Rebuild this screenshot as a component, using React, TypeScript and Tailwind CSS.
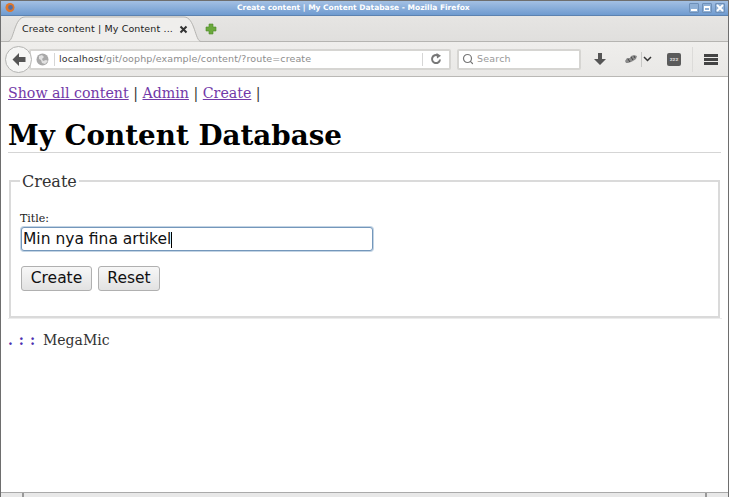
import { Search } from "lucide-react";

const serif = "font-['DejaVu_Serif',serif]";
const sans = "font-['DejaVu_Sans',sans-serif]";

function WinButton({ kind }: { kind: "min" | "max" | "close" }) {
  return (
    <div className="w-[10px] h-[10px] bg-[#8fb0d6] border border-[#6d8fb8] rounded-[1px] flex items-center justify-center">
      {kind === "min" && <div className="w-[6px] h-[2px] bg-white mt-[4px]" />}
      {kind === "max" && <div className="w-[6px] h-[5px] border border-t-2 border-white" />}
      {kind === "close" && (
        <svg width="8" height="8" viewBox="0 0 8 8">
          <path d="M1 1l6 6M7 1L1 7" stroke="#fff" strokeWidth="1.8" />
        </svg>
      )}
    </div>
  );
}

function TitleBar() {
  return (
    <div className="relative h-[16px] shrink-0 bg-gradient-to-b from-[#a3c0e3] to-[#6f9bd0] border-t border-t-[#6e6e6e] border-b border-b-[#5c82b0] flex items-center">
      <svg className="absolute left-[4px] top-[1px]" width="10" height="11" viewBox="0 0 10 11">
        <circle cx="5" cy="5.5" r="4.5" fill="#e0762a" />
        <circle cx="5.5" cy="5.5" r="2.4" fill="#5a6f9c" />
      </svg>
      <span className={`${sans} ml-[236px] text-[7.5px] font-bold text-white leading-none`}>
        Create content | My Content Database - Mozilla Firefox
      </span>
      <div className="absolute right-[3px] top-[2px] flex gap-[3px]">
        <WinButton kind="min" />
        <WinButton kind="max" />
        <WinButton kind="close" />
      </div>
    </div>
  );
}

function TabStrip() {
  return (
    <div className="relative h-[26px] shrink-0 bg-gradient-to-b from-[#e6e5e3] to-[#e0dfdd] border-b border-[#b5b4b1]">
      <svg className="absolute left-[7px] top-[0px]" width="194" height="26" viewBox="0 0 194 26">
        <path
          d="M0 25.5C6 25.5 6 1 17 1H176C187 1 187 25.5 193 25.5"
          fill="#efeeec"
          stroke="#b5b4b1"
        />
      </svg>
      <span className={`${sans} absolute left-[21px] top-[7px] text-[9.5px] leading-[12px] tracking-[0.13px] text-[#222]`}>
        Create content | My Content ...
      </span>
      <svg className="absolute left-[178px] top-[9px]" width="9" height="9" viewBox="0 0 9 9">
        <path d="M1.5 1.5l6 6M7.5 1.5l-6 6" stroke="#333" strokeWidth="2" />
      </svg>
      <svg className="absolute left-[204px] top-[7px]" width="12" height="12" viewBox="0 0 12 12">
        <path d="M4 1h4v3h3v4H8v3H4V8H1V4h3z" fill="#6aa83c" stroke="#4f8a2a" strokeWidth="0.6" />
      </svg>
    </div>
  );
}

function NavBar() {
  return (
    <div className="relative h-[35px] shrink-0 bg-gradient-to-b from-[#efeeec] to-[#e9e8e6] border-b border-[#b9b8b5] flex items-center">
      <div className="absolute left-[4px] top-[4px] w-[27px] h-[27px] rounded-full bg-[#f6f6f5] border border-[#b4b4b2] flex items-center justify-center z-10">
        <svg width="16" height="15" viewBox="0 0 16 15">
          <path d="M8 1L1.5 7.5 8 14v-4h6.5V5H8z" fill="#555" />
        </svg>
      </div>
      <div className="ml-[28px] w-[422px] h-[21px] shrink-0 bg-white border-2 border-[#d6d5d2] rounded-[2px] flex items-center">
        <svg className="ml-[5px] shrink-0" width="13" height="13" viewBox="0 0 13 13">
          <circle cx="6.5" cy="6.5" r="6" fill="#a9a9a9" />
          <path d="M3 3l3-1 2 2-2 2 1 2 3-1 2 1-3 3-3-1-1-3-2-1z" fill="#e2e2e2" />
        </svg>
        <div className="w-px h-[13px] bg-[#d6d6d6] ml-[5px] mr-[4px]" />
        <span className={`${sans} text-[9.5px] leading-none tracking-[0.12px] text-[#8d8d8d] flex-1`}>
          <span className="text-[#333]">localhost</span>/git/oophp/example/content/?route=create
        </span>
        <div className="w-px h-[13px] bg-[#d6d6d6]" />
        <svg className="mx-[7px] shrink-0" width="12" height="12" viewBox="0 0 12 12">
          <path d="M10 6.5A4 4 0 1 1 8 2.6" fill="none" stroke="#777" strokeWidth="2" />
          <path d="M6.5 0L11 2.8 7 5.5z" fill="#777" />
        </svg>
      </div>
      <div className="ml-[6px] w-[124px] h-[21px] shrink-0 bg-white border-2 border-[#d6d5d2] rounded-[2px] flex items-center">
        <Search className="ml-[3px] mr-[3px] text-[#777]" size={12} strokeWidth={2.4} />
        <span className={`${sans} text-[9.5px] leading-none tracking-[0.2px] text-[#999]`}>Search</span>
      </div>
      <svg className="ml-[12px] shrink-0" width="14" height="14" viewBox="0 0 14 14">
        <path d="M5 1h4v6h4l-6 6-6-6h4z" fill="#555" />
      </svg>
      <svg className="ml-[17px] shrink-0" width="14" height="12" viewBox="0 0 14 12">
        <path d="M1 8l2-3 3 0 1-2 3-1 3 1-1 3-3 2-2 1-3 1H2z" fill="#8a8a8a" />
        <path d="M4 6l2 3M7 4l2 3M10 3l1 2" stroke="#444" strokeWidth="1" />
      </svg>
      <div className="w-px h-[15px] bg-[#c8c8c6] ml-[3px] shrink-0" />
      <svg className="ml-[1px] shrink-0" width="9" height="6" viewBox="0 0 9 6">
        <path d="M1 1l3.5 3.5L8 1" fill="none" stroke="#333" strokeWidth="1.5" />
      </svg>
      <div className="ml-[15px] w-[14px] h-[13px] shrink-0 rounded-[2px] bg-[#5b5b5b] flex items-center justify-center">
        <span className={`${sans} text-[5px] leading-none font-bold text-[#cfcfcf]`}>zzz</span>
      </div>
      <div className="w-px h-[25px] bg-[#dcdbd9] ml-[11px] shrink-0" />
      <div className="ml-[11px] flex flex-col gap-[1px] shrink-0">
        <div className="w-[14px] h-[3px] bg-[#444]" />
        <div className="w-[14px] h-[3px] bg-[#444]" />
        <div className="w-[14px] h-[3px] bg-[#444]" />
      </div>
    </div>
  );
}

function Page() {
  return (
    <div className={`${serif} flex-1 min-h-0 bg-white px-[7px] pt-[6px] text-[#333]`}>
      <nav className="text-[14.2px] leading-[20px]">
        <a className="text-[#7239a8] underline">Show all content</a> |{" "}
        <a className="text-[#7239a8] underline">Admin</a> |{" "}
        <a className="text-[#7239a8] underline">Create</a> |
      </nav>
      <h1 className="mt-[16px] text-[27.75px] leading-[33px] font-bold text-black border-b border-[#d5d5d5]">
        My Content Database
      </h1>
      <fieldset className="mt-[18px] border-2 border-[#dadada] px-[10px] h-[147px] mx-px">
        <legend className="text-[16px] leading-[18px] pt-[2px] px-[2px] -ml-px text-[#333]">Create</legend>
        <label className="block mt-[21px] -ml-px text-[11px] leading-[14px] text-[#222]">Title:</label>
        <div
          className={`${sans} h-[24px] w-[352px] mt-px border border-[#7497bb] shadow-[0_0_0_1px_#c3d4e4] rounded-[3px] bg-white pl-px pt-px text-[15.5px] leading-[21px] text-[#111] flex items-center`}
        >
          Min nya fina artikel
          <span className="w-px h-[16px] bg-black" />
        </div>
        <div className={`${sans} mt-[15px] flex gap-[6px]`}>
          <button className="w-[71px] h-[25px] rounded-[3px] border border-[#b0b0b0] bg-gradient-to-b from-[#f7f7f7] to-[#e2e2e2] text-[15.5px] leading-none text-[#111]">
            Create
          </button>
          <button className="w-[62px] h-[25px] rounded-[3px] border border-[#b0b0b0] bg-gradient-to-b from-[#f7f7f7] to-[#e2e2e2] text-[15.5px] leading-none text-[#111]">
            Reset
          </button>
        </div>
      </fieldset>
      <div className="h-px bg-[#ececec] mr-[-1px]" />
      <footer className="mt-[12px] text-[14px] leading-[18px] text-[#333] flex items-baseline">
        <span className="text-[#4b2fb0] w-[35px] tracking-[6px] font-bold">.::</span>
        <span>MegaMic</span>
      </footer>
    </div>
  );
}

export default function App() {
  return (
    <div className="w-[729px] h-[497px] overflow-hidden bg-white flex flex-col border-x border-[#6e6e6e]">
      <TitleBar />
      <TabStrip />
      <NavBar />
      <Page />
      <div className="h-[5px] shrink-0 bg-[#e8e8e8] border-t border-[#aaa] flex justify-between px-[21px]">
        <div className="w-[2px] bg-[#999]" />
        <div className="w-[2px] bg-[#999]" />
      </div>
    </div>
  );
}
